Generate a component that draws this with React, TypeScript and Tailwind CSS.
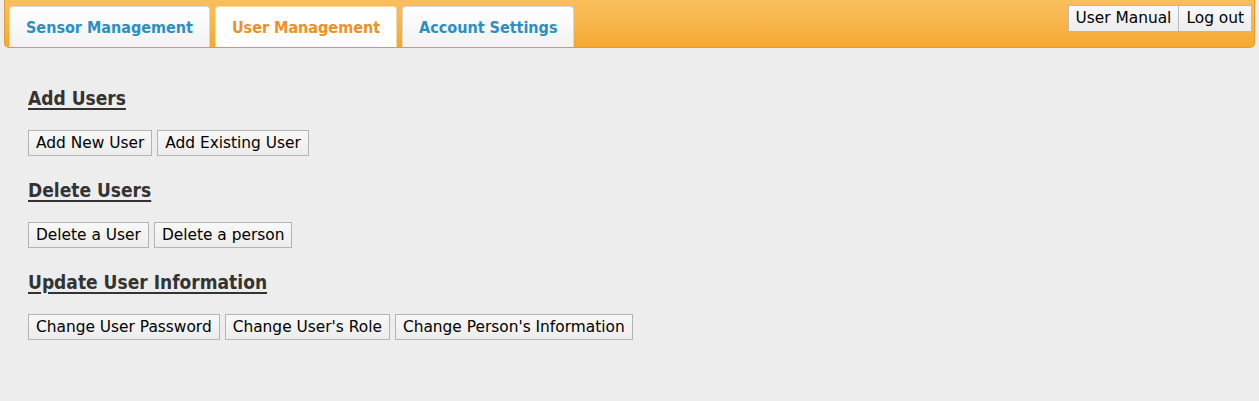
const font = { fontFamily: '"DejaVu Sans", Verdana, sans-serif' };
const cond = { fontFamily: '"DejaVu Sans Condensed", "DejaVu Sans", sans-serif' };

function Tab({ label, active }: { label: string; active?: boolean }) {
  return (
    <div
      style={cond}
      className={`flex h-[41px] items-center rounded-t-[4px] border border-b-0 px-[16px] pt-[2px] text-[16px] font-bold ${
        active
          ? 'border-[#f7d9a0] bg-white text-[#f0901e]'
          : 'border-[#d8d8d8] bg-gradient-to-b from-white to-[#f2f2f2] text-[#2b8fc2]'
      }`}
    >
      {label}
    </div>
  );
}

function Btn({ label }: { label: string }) {
  return (
    <button
      type="button"
      className="h-[26px] border border-[#b4b4b4] bg-gradient-to-b from-[#f8f8f8] to-[#ececec] px-[7px] pt-px text-[15.4px] leading-none text-black"
    >
      {label}
    </button>
  );
}

function Section({ title, buttons }: { title: string; buttons: string[] }) {
  return (
    <section className="flex flex-col">
      <h2
        style={cond}
        className="text-[19px] font-bold leading-[24px] text-[#333] underline decoration-2 underline-offset-[3px]"
      >
        {title}
      </h2>
      <div className="mt-[20px] flex gap-[5px]">
        {buttons.map((b) => (
          <Btn key={b} label={b} />
        ))}
      </div>
    </section>
  );
}

export default function App() {
  return (
    <div className="h-[401px] w-[1259px] overflow-hidden bg-[#ededed]" style={font}>
      <header className="mx-[4px] flex h-[48px] items-end justify-between rounded-b-[5px] border border-t-0 border-[#eb9a2a] bg-gradient-to-b from-[#f9bf5c] via-[#f7b64a] to-[#f5a82e] pl-[4px] pr-[2px]">
        <nav className="flex gap-[5px]">
          <Tab label="Sensor Management" />
          <Tab label="User Management" active />
          <Tab label="Account Settings" />
        </nav>
        <div className="mb-[15px] flex self-end">
          <button
            type="button"
            className="h-[27px] border border-[#b8b8b8] bg-gradient-to-b from-[#fafafa] to-[#ececec] px-[7px] pt-px text-[15.4px] leading-none text-black"
          >
            User Manual
          </button>
          <button
            type="button"
            className="h-[27px] border border-l-0 border-[#b8b8b8] bg-gradient-to-b from-[#fafafa] to-[#ececec] px-[7px] pt-px text-[15.4px] leading-none text-black"
          >
            Log out
          </button>
        </div>
      </header>
      <main className="flex flex-col gap-[22px] pl-[28px] pt-[38px]">
        <Section title="Add Users" buttons={['Add New User', 'Add Existing User']} />
        <Section title="Delete Users" buttons={['Delete a User', 'Delete a person']} />
        <Section
          title="Update User Information"
          buttons={['Change User Password', "Change User's Role", "Change Person's Information"]}
        />
      </main>
    </div>
  );
}
